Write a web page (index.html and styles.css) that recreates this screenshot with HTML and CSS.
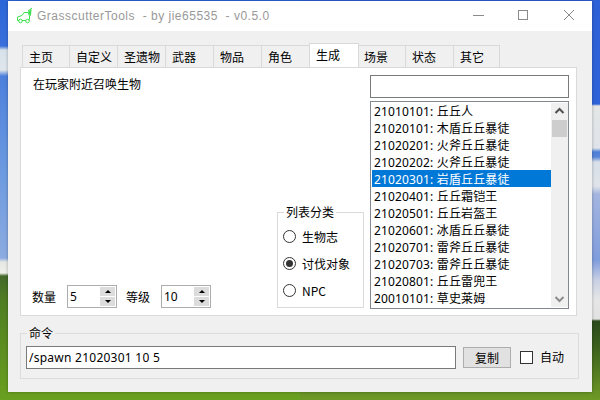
FILE: index.html
```html
<!DOCTYPE html>
<html lang="zh">
<head>
<meta charset="utf-8">
<title>GrasscutterTools</title>
<link rel="stylesheet" href="styles.css">
</head>
<body>
<div class="desktop">
  <div class="window">
    <header class="titlebar">
      <svg class="app-icon" width="16" height="18" viewBox="0 0 16 18" fill="none" stroke="#3fe04f" stroke-width="1">
        <path d="M2 13.500H0.500V10L5 8.500L7 5.500H11L12.500 9V12.500L12 13.500"/>
        <path d="M5 13.500H9"/>
        <path d="M11 4L15 1"/>
        <path d="M11.500 5L14 2.500L13.500 8.500Z" fill="#3fe04f"/>
        <circle cx="3.500" cy="14" r="1.800"/>
        <circle cx="10.500" cy="14" r="1.800"/>
      </svg>
      <span class="title">GrasscutterTools&nbsp; - by jie65535&nbsp; - v0.5.0</span>
      <div class="caption-buttons">
        <svg width="46" height="30" viewBox="0 0 46 30"><path d="M19 14.500H30" stroke="#8a8a8a"/></svg>
        <svg width="46" height="30" viewBox="0 0 46 30"><rect x="18.500" y="9.500" width="9" height="9" fill="none" stroke="#8a8a8a"/></svg>
        <svg width="46" height="30" viewBox="0 0 46 30"><path d="M18 9L28 19M28 9L18 19" stroke="#8a8a8a" fill="none"/></svg>
      </div>
    </header>
    <main class="client">
      <nav class="tabs">
        <span class="tab">主页</span>
        <span class="tab">自定义</span>
        <span class="tab">圣遗物</span>
        <span class="tab">武器</span>
        <span class="tab">物品</span>
        <span class="tab">角色</span>
        <span class="tab active">生成</span>
        <span class="tab">场景</span>
        <span class="tab">状态</span>
        <span class="tab tab-last">其它</span>
      </nav>
      <section class="panel">
        <div class="left">
          <p class="hint">在玩家附近召唤生物</p>
          <div class="fields">
            <label class="field-label">数量</label>
            <div class="spinner">
              <span class="spin-value">5</span>
              <span class="spin-buttons">
                <span class="spin-btn"><i class="arrow-up"></i></span>
                <span class="spin-btn"><i class="arrow-down"></i></span>
              </span>
            </div>
            <label class="field-label second">等级</label>
            <div class="spinner">
              <span class="spin-value">10</span>
              <span class="spin-buttons">
                <span class="spin-btn"><i class="arrow-up"></i></span>
                <span class="spin-btn"><i class="arrow-down"></i></span>
              </span>
            </div>
          </div>
        </div>
        <fieldset class="category">
          <legend>列表分类</legend>
          <div class="radio-row"><span class="radio"></span>生物志</div>
          <div class="radio-row"><span class="radio checked"></span>讨伐对象</div>
          <div class="radio-row"><span class="radio"></span>NPC</div>
        </fieldset>
        <div class="right">
          <div class="search"></div>
          <div class="listbox">
            <ul class="items">
              <li>21010101: 丘丘人</li>
              <li>21020101: 木盾丘丘暴徒</li>
              <li>21020201: 火斧丘丘暴徒</li>
              <li>21020202: 火斧丘丘暴徒</li>
              <li class="selected">21020301: 岩盾丘丘暴徒</li>
              <li>21020401: 丘丘霜铠王</li>
              <li>21020501: 丘丘岩盔王</li>
              <li>21020601: 冰盾丘丘暴徒</li>
              <li>21020701: 雷斧丘丘暴徒</li>
              <li>21020703: 雷斧丘丘暴徒</li>
              <li>21020801: 丘丘雷兜王</li>
              <li>20010101: 草史莱姆</li>
            </ul>
            <div class="scrollbar">
              <svg width="15" height="17" viewBox="0 0 15 17"><path d="M3.500 10L7.500 6L11.500 10" fill="none" stroke="#505050" stroke-width="2"/></svg>
              <div class="thumb"></div>
              <div class="track"></div>
              <svg width="15" height="17" viewBox="0 0 15 17"><path d="M3.500 7L7.500 11L11.500 7" fill="none" stroke="#8c8c8c" stroke-width="2"/></svg>
            </div>
          </div>
        </div>
      </section>
      <fieldset class="command">
        <legend>命令</legend>
        <div class="command-input">/spawn 21020301 10 5</div>
        <button class="copy" type="button">复制</button>
        <span class="check"></span>
        <span class="check-label">自动</span>
      </fieldset>
    </main>
  </div>
</div>
</body>
</html>
```
FILE: styles.css
```css
* { box-sizing: border-box; }
html, body { margin: 0; padding: 0; }
body { width: 600px; height: 400px; overflow: hidden; font-family: "Noto Sans CJK SC", "Liberation Sans", sans-serif; }
.desktop {
  position: relative; width: 600px; height: 400px;
  background:
    linear-gradient(180deg, #2d5fd6 0, #2f62d8 104px, #e4e6e6 106px, #dfe4ea 148px, #4f7fd8 152px, #5a86d8 157px, #d8dfe8 162px, #e0e4ea 186px, #a4b6e0 194px, #7f9cdc 260px, #c8d0e4 280px, #e6e6e6 300px, #e2e2e2 319px, #2c4a1c 321px, #3a5f1e 345px, #6f9a26 400px) right top / 50% 100% no-repeat,
    linear-gradient(180deg, #2c66d8 0, #3a70dc 46px, #d8e2ea 50px, #dfe6ec 70px, #4c80dc 76px, #6f9ce0 180px, #8cabe0 258px, #e6e8e4 262px, #eeeeea 273px, #44682a 276px, #4f7d22 300px, #6aa020 400px) left top / 50% 100% no-repeat;
}
.window {
  position: absolute; left: 8px; top: 1px; width: 584px; height: 391px;
  background: #f0f0f0; display: flex; flex-direction: column;
  box-shadow: 0 0 3px rgba(0,0,0,.3);
}
.titlebar { height: 30px; background: #fff; display: flex; align-items: center; padding-left: 9px; flex: none; }
.app-icon { flex: none; }
.title { margin-left: 4px; font: 12px "Liberation Sans", sans-serif; color: #999; letter-spacing: .5px; white-space: pre; }
.caption-buttons { margin-left: auto; display: flex; }
.caption-buttons svg { display: block; }
.client { flex: 1; padding: 14px 13px 14px 12px; display: flex; flex-direction: column; }
.tabs { display: flex; height: 22px; padding-left: 2px; font-size: 12px; color: #000; }
.tab { width: 48px; height: 22px; border: 1px solid #d9d9d9; border-bottom: 0; border-left-width: 0; background: #f0f0f0; padding-left: 6px; line-height: 21px; white-space: nowrap; }
.tab:first-child { border-left-width: 1px; }
.tab.active { position: relative; height: 24px; margin-top: -2px; margin-left: -1px; width: 50px; background: #fff; border-left-width: 1px; padding-left: 6px; line-height: 22px; z-index: 1; }
.tab.active + .tab { width: 47px; padding-left: 5px; }
.tab-last { width: 46px; }
.panel { height: 249px; width: 557px; background: #fff; border: 1px solid #d9d9d9; display: flex; padding: 7px 7px 6px 11px; font-size: 12px; }
.left { width: 245px; display: flex; flex-direction: column; justify-content: space-between; }
.hint { margin: 0; line-height: 16px; padding: 1px 0 0 1px; }
.fields { display: flex; align-items: center; height: 23px; margin-bottom: 1px; }
.field-label { width: 35px; }
.field-label.second { margin-left: 9px; }
.spinner { width: 50px; height: 23px; background: #fff; border: 1px solid #adadad; display: flex; align-items: center; justify-content: space-between; padding: 0 1px 0 2px; font: 12px "Noto Sans", sans-serif; }
.spin-buttons { display: flex; flex-direction: column; gap: 1px; width: 15px; }
.spin-btn { height: 9px; background: #dcdcdc; display: flex; align-items: center; justify-content: center; }
.arrow-up, .arrow-down { width: 0; height: 0; border-left: 3px solid transparent; border-right: 3px solid transparent; }
.arrow-up { border-bottom: 3px solid #000; }
.arrow-down { border-top: 3px solid #000; }
.category { width: 87px; height: 103px; margin: 130px 0 0 0; padding: 4px 0 0 5px; border: 1px solid #d9d9d9; min-width: 0; }
.category legend { margin-left: 1px; padding: 0 2px; line-height: 14px; }
.radio-row { display: flex; align-items: center; height: 27px; gap: 6px; line-height: 14px; }
.radio { width: 13px; height: 13px; border: 1px solid #333; border-radius: 50%; background: #fff; flex: none; display: flex; align-items: center; justify-content: center; }
.radio.checked::after { content: ""; width: 7px; height: 7px; border-radius: 50%; background: #333; }
.right { margin-left: 6px; width: 199px; display: flex; flex-direction: column; gap: 3px; }
.search { height: 23px; border: 1px solid #7a7a7a; background: #fff; flex: none; }
.listbox { height: 208px; border: 1px solid #828790; background: #fff; display: flex; flex: none; }
.items { list-style: none; margin: 0; padding: 0 0 0 1px; flex: 1; overflow: hidden; }
.items li { height: 17px; line-height: 19px; overflow: hidden; padding-left: 2px; white-space: nowrap; color: #000; letter-spacing: .15px; font-family: "Noto Sans", "Noto Sans CJK SC", sans-serif; }
.items li.selected { background: #0078d7; color: #fff; }
.scrollbar { width: 17px; margin: 1px 0; background: #f0f0f0; display: flex; flex-direction: column; align-items: center; }
.scrollbar svg { flex: none; display: block; }
.thumb { width: 15px; height: 17px; background: #cdcdcd; flex: none; }
.track { flex: 1; }
.command { height: 53px; width: 559px; margin: 10px 0 0 0; padding: 6px 7px 0 5px; border: 1px solid #dcdcdc; display: flex; align-items: flex-start; font-size: 12px; min-width: 0; }
.command legend { margin-left: 1px; padding: 0 2px; line-height: 14px; }
.command-input { width: 430px; height: 23px; border: 1px solid #7a7a7a; background: #fff; padding: 0 2px; font: 12px/21px "Noto Sans", sans-serif; letter-spacing: .25px; white-space: nowrap; }
.copy { width: 48px; height: 21px; margin: 1px 0 0 7px; padding: 0; border: 1px solid #adadad; background: #e1e1e1; font: 12px "Noto Sans CJK SC", sans-serif; color: #000; }
.check { width: 13px; height: 13px; border: 1px solid #333; background: #fff; margin: 5px 0 0 9px; }
.check-label { margin: 3px 0 0 7px; line-height: 16px; }
```
